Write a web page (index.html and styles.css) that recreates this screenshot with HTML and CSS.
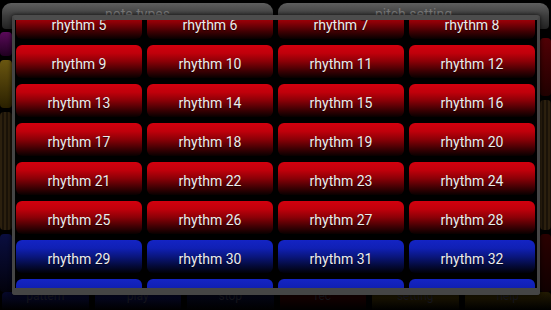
FILE: index.html
```html
<!DOCTYPE html>
<html>
<head>
<meta charset="utf-8">
<link rel="stylesheet" href="styles.css">
</head>
<body>
<div class="screen">
  <div class="tabs">
    <div class="tab">note types</div>
    <div class="tab">pitch setting</div>
  </div>
  <div class="middle">
    <div class="side side-left">
      <div class="blk purple"></div>
      <div class="blk olive"></div>
      <div class="blk wood"></div>
      <div class="blk navy"></div>
    </div>
    <div class="center"></div>
    <div class="side side-right">
      <div class="blk dred"></div>
      <div class="blk wood tall"></div>
      <div class="blk dred2"></div>
    </div>
  </div>
  <div class="bottom">
    <div class="bb b-navy">pattern</div>
    <div class="bb b-navy">play</div>
    <div class="bb b-dark">stop</div>
    <div class="bb b-red">rec</div>
    <div class="bb b-gold">setting</div>
    <div class="bb b-gold">help</div>
  </div>

  <div class="dialog">
    <div class="viewport">
      <div class="grid">
        <div class="btn red">rhythm 5</div>
        <div class="btn red">rhythm 6</div>
        <div class="btn red">rhythm 7</div>
        <div class="btn red">rhythm 8</div>
        <div class="btn red">rhythm 9</div>
        <div class="btn red">rhythm 10</div>
        <div class="btn red">rhythm 11</div>
        <div class="btn red">rhythm 12</div>
        <div class="btn red">rhythm 13</div>
        <div class="btn red">rhythm 14</div>
        <div class="btn red">rhythm 15</div>
        <div class="btn red">rhythm 16</div>
        <div class="btn red">rhythm 17</div>
        <div class="btn red">rhythm 18</div>
        <div class="btn red">rhythm 19</div>
        <div class="btn red">rhythm 20</div>
        <div class="btn red">rhythm 21</div>
        <div class="btn red">rhythm 22</div>
        <div class="btn red">rhythm 23</div>
        <div class="btn red">rhythm 24</div>
        <div class="btn red">rhythm 25</div>
        <div class="btn red">rhythm 26</div>
        <div class="btn red">rhythm 27</div>
        <div class="btn red">rhythm 28</div>
        <div class="btn blue">rhythm 29</div>
        <div class="btn blue">rhythm 30</div>
        <div class="btn blue">rhythm 31</div>
        <div class="btn blue">rhythm 32</div>
        <div class="btn blue">rhythm 33</div>
        <div class="btn blue">rhythm 34</div>
        <div class="btn blue">rhythm 35</div>
        <div class="btn blue">rhythm 36</div>
      </div>
    </div>
  </div>
</div>
</body>
</html>
```

FILE: styles.css
```css
html, body {
  margin: 0;
  padding: 0;
  background: #000;
}

.screen {
  position: relative;
  width: 551px;
  height: 310px;
  overflow: hidden;
  background: #000;
  display: flex;
  flex-direction: column;
  font-family: Roboto, "Liberation Sans", sans-serif;
}

/* background app */
.tabs {
  display: flex;
  gap: 5px;
  padding: 3px 2px 0 2px;
  height: 26px;
}
.tab {
  flex: 1;
  border-radius: 9px 9px 4px 4px;
  background: linear-gradient(#5e5e5e, #3c3c3c 50%, #222);
  color: #7a7a7a;
  font-size: 14px;
  text-align: center;
  padding-top: 3px;
  box-sizing: border-box;
}

.middle {
  flex: 1;
  display: flex;
}
.side {
  width: 12px;
  display: flex;
  flex-direction: column;
  gap: 4px;
  padding-top: 3px;
}
.side-right {
  width: 11px;
  margin-left: auto;
}
.center { flex: 1; }
.blk { border-radius: 4px; }
.purple { height: 24px; background: linear-gradient(#5a0a5a, #200020); }
.olive { height: 48px; background: linear-gradient(#6a5610, #2a2000); }
.wood {
  height: 118px;
  background: repeating-linear-gradient(90deg, #2c200e 0 2px, #1a1208 2px 4px);
}
.navy { flex: 1; background: linear-gradient(#0a0e40, #02020c); }
.dred { height: 58px; background: linear-gradient(#500005, #200000); margin-top: 6px; }
.tall { height: 130px; }
.dred2 { flex: 1; background: linear-gradient(#2a0000, #100000); }

.bottom {
  display: flex;
  gap: 6px;
  height: 18px;
  padding: 0 0 0 2px;
}
.bb {
  flex: 1;
  border-radius: 4px 4px 0 0;
  font-size: 12px;
  color: #15151c;
  text-align: center;
  line-height: 8px;
  overflow: hidden;
}
.b-navy { background: linear-gradient(#06082a, #000); }
.b-dark { background: linear-gradient(#04061a, #000); }
.b-red { background: linear-gradient(#1c0000, #000); }
.b-gold { background: linear-gradient(#221a02, #000); }

/* dialog overlay */
.dialog {
  position: absolute;
  left: 12px;
  top: 15px;
  width: 528px;
  height: 280px;
  box-sizing: border-box;
  border-style: solid;
  border-color: #454545;
  border-width: 5px 3px 7px 3px;
  border-top-color: #4c4c4c;
  border-radius: 3px;
  background: #000;
  box-shadow: 0 0 4px rgba(0,0,0,0.8);
}
.viewport {
  width: 100%;
  height: 100%;
  overflow: hidden;
}
.grid {
  margin-top: -14px;
  padding: 0 2px 0 1px;
  display: grid;
  grid-template-columns: repeat(4, 126px);
  grid-auto-rows: 33px;
  column-gap: 5px;
  row-gap: 6px;
}

.btn {
  border-radius: 6px;
  display: flex;
  align-items: center;
  justify-content: center;
  padding-top: 4px;
  box-sizing: border-box;
  color: #ececec;
  font-size: 14px;
  text-shadow: 0 1px 1px rgba(0,0,0,0.6);
}
.red {
  background: linear-gradient(#d2000e 0%, #c0000b 25%, #8a0007 50%, #3e0003 78%, #080000 100%);
}
.blue {
  background: linear-gradient(#1424c4 0%, #1020b4 25%, #0a167e 50%, #040a3a 78%, #000008 100%);
}
```
